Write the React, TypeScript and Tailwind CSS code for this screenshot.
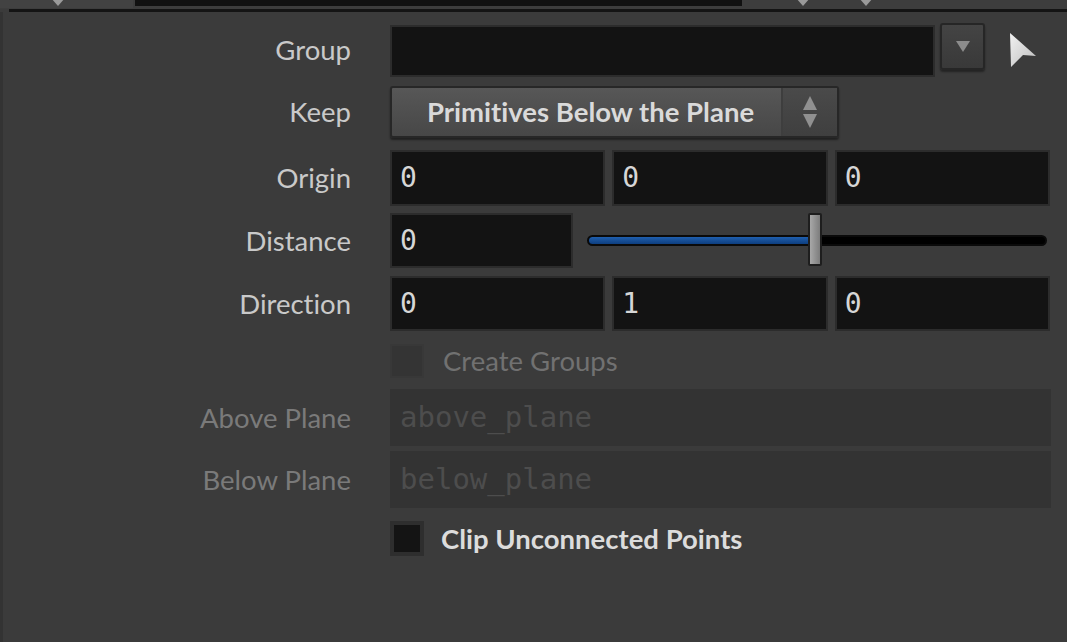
import React from "react";

const sans = { fontFamily: "Lato, 'Noto Sans', sans-serif" };
const mono = { fontFamily: "'DejaVu Sans Mono', 'Liberation Mono', monospace" };

function Label({ text, dim }: { text: string; dim?: boolean }) {
  return (
    <div
      className={`w-[351px] shrink-0 text-right text-[27.5px] leading-none ${dim ? "text-[#7a7a7a]" : "text-[#c9c9c9]"}`}
      style={sans}
    >
      {text}
    </div>
  );
}

function Field({ value, className = "" }: { value?: string; className?: string }) {
  return (
    <div
      className={`flex h-full items-center border-2 border-[#2c2c2c] bg-[#131313] pl-[8px] text-[28px] text-[#d6d6d6] ${className}`}
      style={mono}
    >
      {value}
    </div>
  );
}

function Triangle({ className = "" }: { className?: string }) {
  return (
    <svg width="14" height="8" viewBox="0 0 14 8" className={className}>
      <polygon points="0,0 14,0 7,8" fill="#9a9a9a" />
    </svg>
  );
}

export default function App() {
  return (
    <div
      className="relative h-[642px] w-[1067px] overflow-hidden bg-[#3b3b3b] [font-variant-ligatures:none]"
      style={sans}
    >
      {/* top strip from the pane above */}
      <div className="flex h-[9px] items-start bg-[#3d3d3d]">
        <div className="relative h-[8px] w-[133px] bg-[#424242]">
          <Triangle className="absolute left-[51px] top-[-2px]" />
        </div>
        <div className="ml-[2px] h-[6px] w-[607px] bg-[#111111]" />
        <div className="relative h-[8px] flex-1">
          <Triangle className="absolute left-[54px] top-[-2px]" />
          <Triangle className="absolute left-[117px] top-[-2px]" />
        </div>
      </div>
      <div className="ml-[9px] h-[3px] bg-[#141414]" />
      <div className="absolute left-0 top-[12px] h-[630px] w-[3px] bg-[#333333]" />

      <div className="flex flex-col pt-[10px]">
        {/* Group */}
        <div className="flex h-[56px] items-center">
          <Label text="Group" />
          <div className="ml-[39px] flex h-full items-start">
            <div className="mt-[3px] h-[52px] w-[545px]">
              <Field />
            </div>
            <div className="ml-[5px] mt-[1px] flex h-[47px] w-[45px] items-center justify-center rounded-[3px] border-2 border-[#262626] bg-gradient-to-b from-[#444444] to-[#393939] shadow-[0_2px_2px_rgba(0,0,0,0.4)]">
              <svg width="14" height="11" viewBox="0 0 14 11">
                <polygon points="0,0 14,0 7,11" fill="#8c8c8c" />
              </svg>
            </div>
            <svg width="30" height="36" viewBox="0 0 30 36" className="ml-[23px] mt-[10px]">
              <defs>
                <linearGradient id="cur" x1="0" y1="0" x2="1" y2="1">
                  <stop offset="0%" stopColor="#f2f2f2" />
                  <stop offset="100%" stopColor="#bdbdbd" />
                </linearGradient>
              </defs>
              <polygon points="2,1 28,24 15,23 3,35" fill="url(#cur)" />
            </svg>
          </div>
        </div>

        {/* Keep */}
        <div className="mt-[8px] flex h-[52px] items-center">
          <Label text="Keep" />
          <div className="ml-[39px] flex h-[52px] w-[449px] items-stretch rounded-[3px] border-2 border-[#272727] bg-gradient-to-b from-[#575757] to-[#474747] shadow-[0_2px_2px_rgba(0,0,0,0.45)]">
            <div className="flex flex-1 items-center pl-[35px] text-[27.5px] font-bold text-[#dadada]">
              Primitives Below the Plane
            </div>
            <div className="flex w-[56px] items-center justify-center border-l-2 border-[#3e3e3e] bg-gradient-to-b from-[#4a4a4a] to-[#3f3f3f]">
              <svg width="16" height="34" viewBox="0 0 16 34">
                <polygon points="8,1 15,15 1,15" fill="#909090" />
                <polygon points="1,19 15,19 8,33" fill="#909090" />
              </svg>
            </div>
          </div>
        </div>

        {/* Origin */}
        <div className="mt-[12px] flex h-[56px] items-center">
          <Label text="Origin" />
          <div className="ml-[39px] grid h-full w-[660px] grid-cols-3 gap-[7px]">
            <Field value="0" />
            <Field value="0" />
            <Field value="0" />
          </div>
        </div>

        {/* Distance */}
        <div className="mt-[7px] flex h-[55px] items-center">
          <Label text="Distance" />
          <div className="ml-[39px] h-full w-[183px]">
            <Field value="0" />
          </div>
          <div className="relative ml-[14px] flex h-full w-[460px] items-center">
            <div className="h-[11px] w-full overflow-hidden rounded-full border-2 border-[#0a0a0a] bg-black">
              <div className="h-full w-[222px] bg-gradient-to-b from-[#1f5fae] to-[#0e3f80]" />
            </div>
            <div className="absolute left-[221px] top-0 h-[53px] w-[14px] rounded-[2px] border-2 border-[#1e1e1e] bg-gradient-to-r from-[#a8a8a8] to-[#7d7d7d]" />
          </div>
        </div>

        {/* Direction */}
        <div className="mt-[8px] flex h-[55px] items-center">
          <Label text="Direction" />
          <div className="ml-[39px] grid h-full w-[660px] grid-cols-3 gap-[7px]">
            <Field value="0" />
            <Field value="1" />
            <Field value="0" />
          </div>
        </div>

        {/* Create Groups */}
        <div className="mt-[13px] flex h-[34px] items-center">
          <div className="w-[351px] shrink-0" />
          <div className="ml-[39px] h-[34px] w-[34px] border-2 border-[#383838] bg-[#343434]" />
          <div className="ml-[19px] text-[27.5px] text-[#717171]">Create Groups</div>
        </div>

        {/* Above Plane */}
        <div className="mt-[11px] flex h-[57px] items-center">
          <Label text="Above Plane" dim />
          <div
            className="ml-[39px] flex h-full w-[661px] items-center bg-[#333333] pl-[10px] text-[29px] text-[#4d4d4d]"
            style={mono}
          >
            above_plane
          </div>
        </div>

        {/* Below Plane */}
        <div className="mt-[5px] flex h-[57px] items-center">
          <Label text="Below Plane" dim />
          <div
            className="ml-[39px] flex h-full w-[661px] items-center bg-[#333333] pl-[10px] text-[29px] text-[#4d4d4d]"
            style={mono}
          >
            below_plane
          </div>
        </div>

        {/* Clip Unconnected Points */}
        <div className="mt-[13px] flex h-[35px] items-center">
          <div className="w-[351px] shrink-0" />
          <div className="ml-[39px] h-[35px] w-[34px] border-[4px] border-[#2e2e2e] bg-[#141414]" />
          <div className="ml-[17px] text-[27.5px] font-bold text-[#dcdcdc]">
            Clip Unconnected Points
          </div>
        </div>
      </div>
    </div>
  );
}
